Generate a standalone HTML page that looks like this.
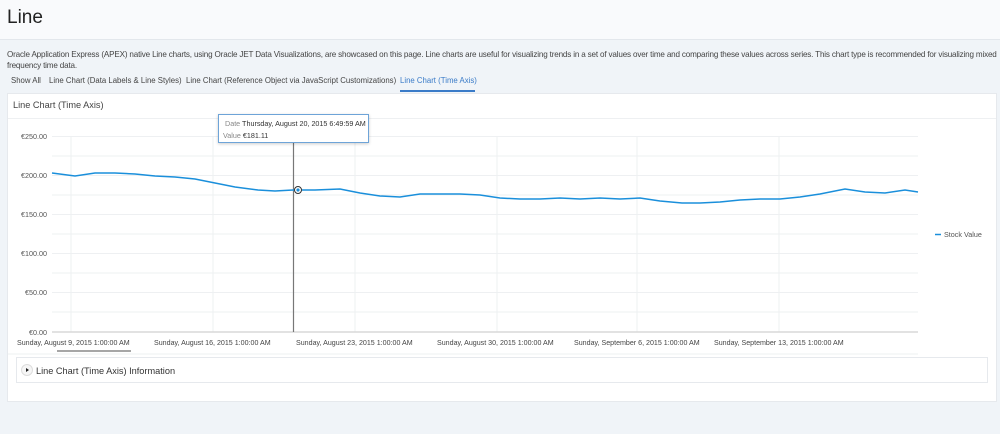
<!DOCTYPE html>
<html><head><meta charset="utf-8"><style>
body{margin:0;width:1000px;height:434px;background:#f0f4f8;font-family:"Liberation Sans",Arial,sans-serif;position:relative;overflow:hidden;color:#333}
.hdr{position:absolute;left:0;top:0;width:1000px;height:39px;background:#f9fafc;border-bottom:1px solid #e3e7ec}
.hdr h1{margin:0;position:absolute;left:7px;top:7px;font-size:19px;font-weight:normal;color:#222}
.desc{position:absolute;left:7px;top:49px;width:1000px;font-size:8.1px;letter-spacing:-0.17px;line-height:11px;color:#444}
.tabs{position:absolute;top:76px;font-size:7.8px;color:#444}
.tab{position:absolute;white-space:nowrap}
.card{position:absolute;left:7px;top:93px;width:990px;height:309px;background:#fff;border:1px solid #e6e9ed;box-sizing:border-box}
.ttl{position:absolute;left:13px;top:100px;font-size:9.2px;color:#444}
.ttlline{position:absolute;left:8px;top:118px;width:988px;height:1px;background:#eef0f2}
svg{position:absolute;left:0;top:0}
svg text{font-family:"Liberation Sans",Arial,sans-serif}
.info{position:absolute;left:16px;top:357px;width:972px;height:26px;border:1px solid #e6e9ed;box-sizing:border-box;background:#fff}
.info span{position:absolute;left:19px;top:8px;font-size:9.2px;color:#333}
.circ{position:absolute;left:4px;top:6px;width:12px;height:12px;border-radius:50%;border:1px solid #ddd;box-sizing:border-box;background:#f6f6f6}
.circ:after{content:"";position:absolute;left:4px;top:3px;border-left:3px solid #222;border-top:2px solid transparent;border-bottom:2px solid transparent}
.tip{position:absolute;left:218px;top:114px;width:151px;height:29px;background:#fff;border:1px solid #6ea4d8;box-sizing:border-box;box-shadow:0 1px 3px rgba(0,0,0,.2);font-size:7.2px;color:#333}
.tip div{position:absolute;white-space:nowrap}
.tip b{font-weight:normal;color:#888}
</style></head><body>
<div class="hdr"><h1>Line</h1></div>
<div class="desc">Oracle Application Express (APEX) native Line charts, using Oracle JET Data Visualizations, are showcased on this page. Line charts are useful for visualizing trends in a set of values over time and comparing these values across series. This chart type is recommended for visualizing mixed<br>frequency time data.</div>
<div class="tabs">
<span class="tab" style="left:11px">Show All</span>
<span class="tab" style="left:49px">Line Chart (Data Labels &amp; Line Styles)</span>
<span class="tab" style="left:186px">Line Chart (Reference Object via JavaScript Customizations)</span>
<span class="tab" style="left:400px;color:#3a7bc8">Line Chart (Time Axis)</span>
</div>
<div style="position:absolute;left:400px;top:90px;width:75px;height:2px;background:#3a7bc8"></div>
<div class="card"></div>
<div class="ttl">Line Chart (Time Axis)</div>
<div class="ttlline"></div>
<svg width="1000" height="434">
<g stroke="#eef0f2" stroke-width="1">
<line x1="52" y1="136.5" x2="918" y2="136.5"/><line x1="52" y1="156" x2="918" y2="156"/><line x1="52" y1="175.5" x2="918" y2="175.5"/><line x1="52" y1="195" x2="918" y2="195"/><line x1="52" y1="214.5" x2="918" y2="214.5"/><line x1="52" y1="234" x2="918" y2="234"/><line x1="52" y1="253.5" x2="918" y2="253.5"/><line x1="52" y1="273" x2="918" y2="273"/><line x1="52" y1="292.5" x2="918" y2="292.5"/><line x1="52" y1="312" x2="918" y2="312"/>
<line x1="71" y1="136" x2="71" y2="332"/><line x1="213" y1="136" x2="213" y2="332"/><line x1="355" y1="136" x2="355" y2="332"/><line x1="497" y1="136" x2="497" y2="332"/><line x1="637" y1="136" x2="637" y2="332"/><line x1="779" y1="136" x2="779" y2="332"/>
</g>
<line x1="52" y1="332" x2="918" y2="332" stroke="#d8d8d8" stroke-width="1.5"/>
<g font-size="7.2" fill="#555" text-anchor="end">
<text x="47" y="139">€250.00</text><text x="47" y="178">€200.00</text><text x="47" y="217">€150.00</text><text x="47" y="256">€100.00</text><text x="47" y="295">€50.00</text><text x="47" y="335">€0.00</text>
</g>
<g font-size="7.1" fill="#444">
<text x="17" y="345">Sunday, August 9, 2015 1:00:00 AM</text>
<text x="154" y="345">Sunday, August 16, 2015 1:00:00 AM</text>
<text x="296" y="345">Sunday, August 23, 2015 1:00:00 AM</text>
<text x="437" y="345">Sunday, August 30, 2015 1:00:00 AM</text>
<text x="574" y="345">Sunday, September 6, 2015 1:00:00 AM</text>
<text x="714" y="345">Sunday, September 13, 2015 1:00:00 AM</text>
</g>
<line x1="57" y1="351" x2="131" y2="351" stroke="#888" stroke-width="1.5"/>
<line x1="8" y1="354" x2="918" y2="354" stroke="#eef0f2"/>
<line x1="293.5" y1="143" x2="293.5" y2="332" stroke="#777" stroke-width="1.2"/>
<polyline fill="none" stroke="#1a8fdb" stroke-width="1.5" points="52,173 75,176 95,173 115,173 135,174 155,176 175,177 195,179 215,183 235,187 258,190 275,191 293,190 315,190 340,189 360,193 380,196 400,197 420,194 440,194 460,194 480,195 500,198 520,199 540,199 560,198 580,199 600,198 620,199 640,198 660,201 682,203 700,203 720,202 740,200 760,199 780,199 800,197 820,194 845,189 865,192 885,193 905,190 918,192"/>
<circle cx="298" cy="190" r="3.5" fill="#fff" stroke="#333" stroke-width="1"/>
<circle cx="298" cy="190" r="1.6" fill="#1a8fdb"/>
<line x1="935" y1="234.5" x2="941" y2="234.5" stroke="#1a8fdb" stroke-width="1.5"/>
<text x="944" y="237" font-size="7.2" fill="#555">Stock Value</text>
</svg>
<div class="tip"><div style="left:6px;top:4px"><b>Date</b> Thursday, August 20, 2015 6:49:59 AM</div><div style="left:4px;top:16px"><b>Value</b> €181.11</div></div>
<div class="info"><div class="circ"></div><span>Line Chart (Time Axis) Information</span></div>
</body></html>
